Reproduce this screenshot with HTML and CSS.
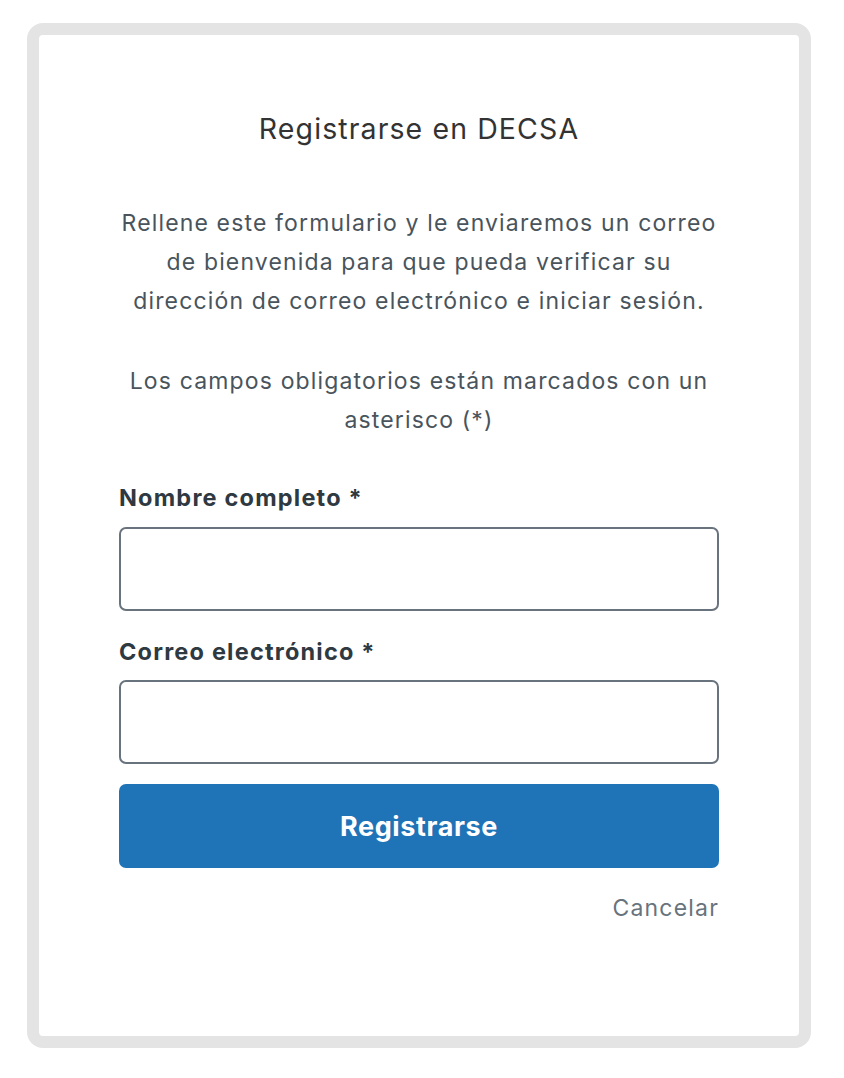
FILE: index.html
```html
<!DOCTYPE html>
<html lang="es">
<head>
<meta charset="utf-8">
<title>Registrarse en DECSA</title>
<link rel="stylesheet" href="styles.css">
</head>
<body>
<div class="frame">
  <div class="card">
    <h1 class="title">Registrarse en DECSA</h1>
    <p class="intro">Rellene este formulario y le enviaremos un correo de bienvenida para que pueda verificar su dirección de correo electrónico e iniciar sesión.</p>
    <p class="intro intro-second">Los campos obligatorios están marcados con un asterisco (*)</p>
    <form class="form">
      <label class="label" for="name">Nombre completo *</label>
      <input class="input" id="name" type="text">
      <label class="label label-next" for="email">Correo electrónico *</label>
      <input class="input" id="email" type="email">
      <button class="submit" type="button">Registrarse</button>
      <div class="cancel-row"><a class="cancel" href="#">Cancelar</a></div>
    </form>
  </div>
</div>
</body>
</html>
```

FILE: styles.css
```css
* { box-sizing: border-box; }
html, body { margin: 0; padding: 0; background: #ffffff; }
body {
  font-family: Inter, "Noto Sans", "Liberation Sans", sans-serif;
  color: #2f3941;
}
.frame {
  margin: 23px 0 0 27px;
  width: 784px;
  height: 1025px;
  border: 12px solid #e4e4e4;
  border-radius: 16px;
  background: #ffffff;
}
.card {
  padding: 76px 80px 0;
}
.title {
  margin: 0;
  font-size: 28.5px;
  line-height: 36px;
  font-weight: 400;
  letter-spacing: 1.1px;
  color: #333333;
  text-align: center;
}
.intro {
  margin: 57px 0 0;
  font-size: 23px;
  line-height: 39px;
  letter-spacing: 1.15px;
  color: #49545c;
  text-align: center;
}
.intro-second { margin-top: 41px; }
.form { display: flex; flex-direction: column; margin-top: 43px; }
.label {
  font-size: 23.5px;
  line-height: 30px;
  font-weight: 700;
  letter-spacing: 1.2px;
  color: #2f3941;
  margin-bottom: 14px;
}
.label-next { margin-top: 26px; margin-bottom: 13px; }
.input {
  height: 84px;
  width: 100%;
  border: 2px solid #68737d;
  border-radius: 7px;
  background: #fff;
  font: inherit;
}
.submit {
  margin-top: 20px;
  height: 84px;
  width: 100%;
  border: none;
  border-radius: 7px;
  background: #1f73b7;
  color: #ffffff;
  font-family: inherit;
  font-size: 27px;
  font-weight: 700;
  letter-spacing: 0.6px;
}
.cancel-row { display: flex; justify-content: flex-end; margin-top: 25px; }
.cancel {
  font-size: 23px;
  line-height: 30px;
  letter-spacing: 1.2px;
  color: #68737d;
  text-decoration: none;
}
```
